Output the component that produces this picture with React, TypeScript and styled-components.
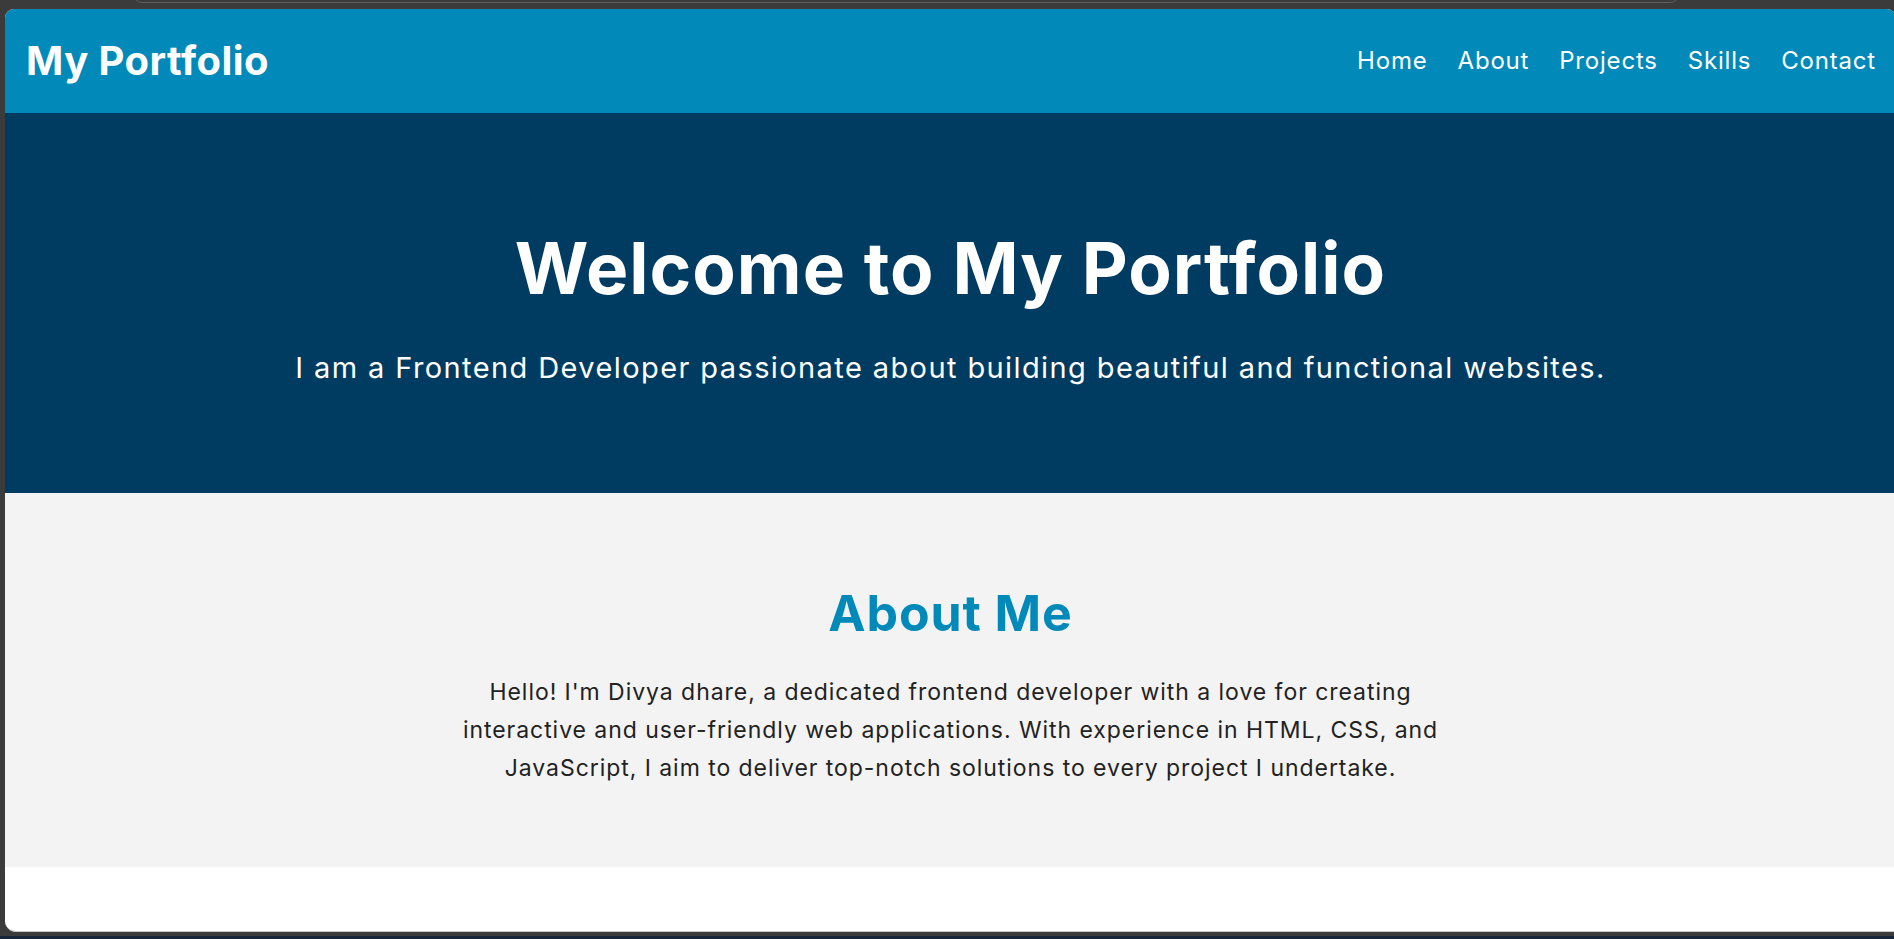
import * as React from 'react';
import styled, {createGlobalStyle} from 'styled-components';

const GlobalStyle = createGlobalStyle`
  html, body {
    margin: 0;
    padding: 0;
    background: #3b3b3b;
    overflow: hidden;
  }
  body {
    font-family: Inter, "Open Sans", sans-serif;
  }
  * {
    box-sizing: border-box;
  }
`;

// the dark desktop strip above the page window
const TopStrip = styled.div`
  height: 9px;
  overflow: hidden;
`;

const TabOutline = styled.div`
  margin: -20px 0 0 133px;
  width: 1546px;
  height: 23px;
  border: 1px solid #5e5e5e;
  border-radius: 0 0 9px 9px;
`;

const Window = styled.div`
  margin-left: 5px;
  width: 1891px;
  height: 923px;
  background: #ffffff;
  border-radius: 9px 9px 0 11px;
  border-bottom: 1px solid #c9c9c9;
  overflow: hidden;
`;

const BottomStrip = styled.div`
  height: 4px;
  border-bottom: 3px solid #16253a;
  box-sizing: content-box;
`;

const Header = styled.header`
  height: 104px;
  padding: 0 20px 0 21px;
  background: #0189b9;
  display: flex;
  align-items: center;
  justify-content: space-between;
  color: #ffffff;
`;

const Logo = styled.h1`
  margin: 0;
  font-size: 40px;
  font-weight: 700;
  letter-spacing: 0.45px;
  line-height: 48px;
`;

const Nav = styled.nav`
  display: flex;
  gap: 30px;
`;

const NavLink = styled.a`
  color: #ffffff;
  text-decoration: none;
  font-size: 24px;
  letter-spacing: 0.8px;
  line-height: 30px;
`;

const Hero = styled.section`
  height: 380px;
  background: #003c61;
  color: #ffffff;
  display: flex;
  flex-direction: column;
  align-items: center;
  padding-top: 110px;
`;

const HeroTitle = styled.h2`
  margin: 0;
  font-size: 71px;
  font-weight: 700;
  letter-spacing: 1px;
  line-height: 90px;
`;

const HeroText = styled.p`
  margin: 35px 0 0;
  font-size: 29px;
  letter-spacing: 1.4px;
  line-height: 40px;
`;

const About = styled.section`
  height: 374px;
  background: #f3f3f3;
  display: flex;
  flex-direction: column;
  align-items: center;
  padding-top: 88px;
`;

const SectionTitle = styled.h2`
  margin: 0;
  color: #0189b9;
  font-size: 50px;
  font-weight: 700;
  letter-spacing: 0.9px;
  line-height: 64px;
`;

const AboutText = styled.p`
  margin: 28px 0 0;
  max-width: 1000px;
  text-align: center;
  color: #222222;
  font-size: 23px;
  letter-spacing: 0.95px;
  line-height: 38px;
`;

const links = ['Home', 'About', 'Projects', 'Skills', 'Contact'];

export default function App(): JSX.Element {
  return (
    <>
      <GlobalStyle />
      <TopStrip>
        <TabOutline />
      </TopStrip>
      <Window>
        <Header>
          <Logo>My Portfolio</Logo>
          <Nav>
            {links.map((l) => (
              <NavLink key={l} href={`#${l.toLowerCase()}`}>
                {l}
              </NavLink>
            ))}
          </Nav>
        </Header>
        <Hero>
          <HeroTitle>Welcome to My Portfolio</HeroTitle>
          <HeroText>
            I am a Frontend Developer passionate about building beautiful and
            functional websites.
          </HeroText>
        </Hero>
        <About id="about">
          <SectionTitle>About Me</SectionTitle>
          <AboutText>
            Hello! I'm Divya dhare, a dedicated frontend developer with a love
            for creating interactive and user-friendly web applications. With
            experience in HTML, CSS, and JavaScript, I aim to deliver top-notch
            solutions to every project I undertake.
          </AboutText>
        </About>
      </Window>
      <BottomStrip />
    </>
  );
}
